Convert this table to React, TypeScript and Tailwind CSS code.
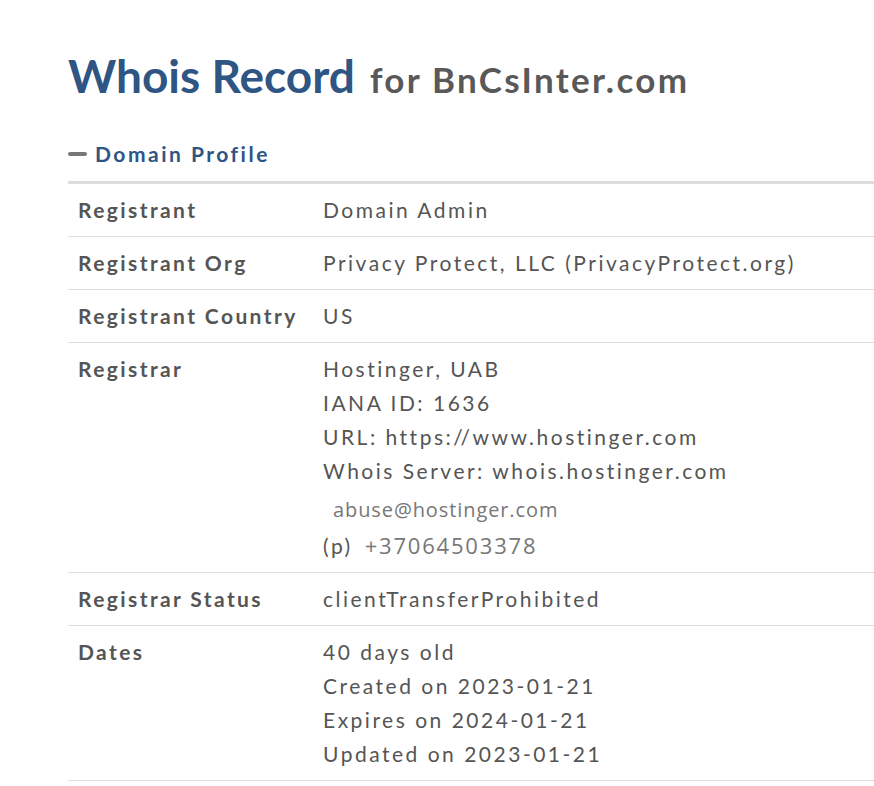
const rows: { label: string; lines: string[] }[] = [
  { label: 'Registrant', lines: ['Domain Admin'] },
  { label: 'Registrant Org', lines: ['Privacy Protect, LLC (PrivacyProtect.org)'] },
  { label: 'Registrant Country', lines: ['US'] },
  {
    label: 'Registrar',
    lines: [
      'Hostinger, UAB',
      'IANA ID: 1636',
      'URL: https://www.hostinger.com',
      'Whois Server: whois.hostinger.com',
    ],
  },
  { label: 'Registrar Status', lines: ['clientTransferProhibited'] },
  {
    label: 'Dates',
    lines: ['40 days old', 'Created on 2023-01-21', 'Expires on 2024-01-21', 'Updated on 2023-01-21'],
  },
];

export default function App() {
  return (
    <div className="min-h-[786px] bg-white pl-[68px] pt-[48px] text-[#555]" style={{ fontFamily: 'Lato, "Open Sans", sans-serif' }}>
      <h1 className="flex items-baseline leading-[56px] font-bold">
        <span className="text-[46px] text-[#2e5584]">Whois Record</span>
        <span className="ml-[15px] text-[35px] tracking-[2.3px] text-[#595959]">for BnCsInter.com</span>
      </h1>

      <div className="mt-[33px] flex items-center gap-[8px]">
        <span className="block h-[4px] w-[19px] rounded-sm bg-[#777]" />
        <span className="text-[21px] font-bold tracking-[2.5px] text-[#2e5584] leading-[28px]">Domain Profile</span>
      </div>

      <div className="mt-[13px] border-t-[3px] border-[#ddd]">
        {rows.map((row, i) => (
          <div key={row.label} className={`flex text-[21px] leading-[34px] ${i > 0 ? 'border-t border-[#ddd]' : ''}`}>
            <div className="w-[245px] shrink-0 py-[9px] pl-[10px] font-bold tracking-[2.4px]">{row.label}</div>
            <div className="py-[9px] pl-[10px] tracking-[2.5px]">
              {row.lines.map((l, j) => (
                <div key={j}>{l}</div>
              ))}
              {row.label === 'Registrar' && (
                <>
                  <div className="mt-[4px] pl-[10px] text-[20px] leading-[36px] text-[#777] tracking-[0.9px]" style={{ fontFamily: '"Open Sans", sans-serif' }}>
                    abuse@hostinger.com
                  </div>
                  <div className="flex items-center leading-[35px]">
                    <span>(p)</span>
                    <span className="ml-[12px] text-[22px] text-[#777] tracking-[1.8px]" style={{ fontFamily: '"Open Sans", sans-serif' }}>
                      +37064503378
                    </span>
                  </div>
                </>
              )}
            </div>
          </div>
        ))}
        <div className="border-t border-[#ddd]" />
      </div>
    </div>
  );
}
